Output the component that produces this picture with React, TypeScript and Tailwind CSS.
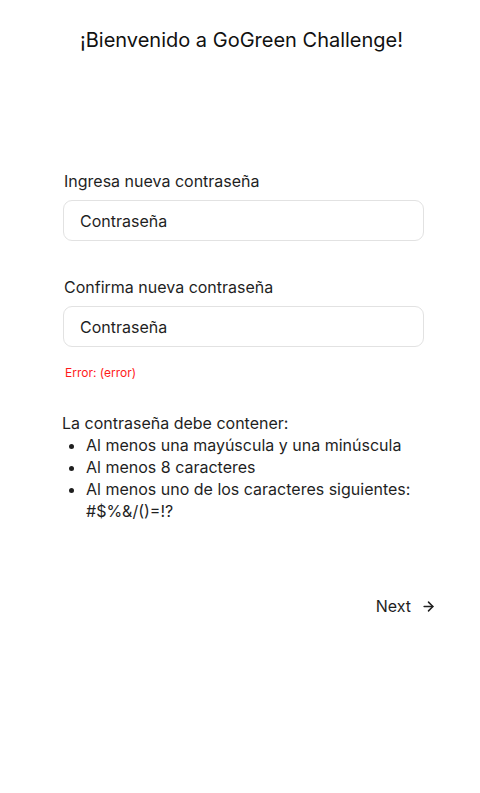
import { ArrowRight } from "lucide-react";

const font = { fontFamily: "Inter, 'Noto Sans', sans-serif" };

function Field({ label }: { label: string }) {
  return (
    <div className="flex flex-col">
      <label className="text-[16px] leading-[24px] text-[#1f1f1f] pl-px">{label}</label>
      <input
        type="password"
        placeholder="Contraseña"
        className="mt-[7px] h-[41px] w-[361px] rounded-[9px] border border-[#e2e2e2] bg-white px-4 text-[16px] text-[#1f1f1f] placeholder:text-[#1f1f1f] outline-none"
      />
    </div>
  );
}

export default function App() {
  return (
    <div className="min-h-[793px] w-[480px] bg-white text-[#1f1f1f]" style={font}>
      <h1 className="pt-[26px] pl-[3px] text-center text-[20px] leading-[28px] text-[#111]">
        ¡Bienvenido a GoGreen Challenge!
      </h1>

      <div className="ml-[63px] mt-[115px] flex flex-col">
        <Field label="Ingresa nueva contraseña" />
        <div className="mt-[34px]">
          <Field label="Confirma nueva contraseña" />
        </div>
        <p className="mt-[18px] pl-[2px] text-[12px] leading-[16px] text-[#ff1a1a]">Error: (error)</p>

        <div className="mt-[31px] -ml-px text-[16px] leading-[22px]">
          <p>La contraseña debe contener:</p>
          <ul className="list-disc pl-[24px]">
            <li>Al menos una mayúscula y una minúscula</li>
            <li>Al menos 8 caracteres</li>
            <li>Al menos uno de los caracteres siguientes: #$%&amp;/()=!?</li>
          </ul>
        </div>
      </div>

      <div className="mt-[72px] flex justify-end pr-[44px]">
        <button className="flex items-center gap-[10px] text-[16px] leading-[24px] text-[#1f1f1f]">
          Next
          <ArrowRight size={15} strokeWidth={2.4} />
        </button>
      </div>
    </div>
  );
}
